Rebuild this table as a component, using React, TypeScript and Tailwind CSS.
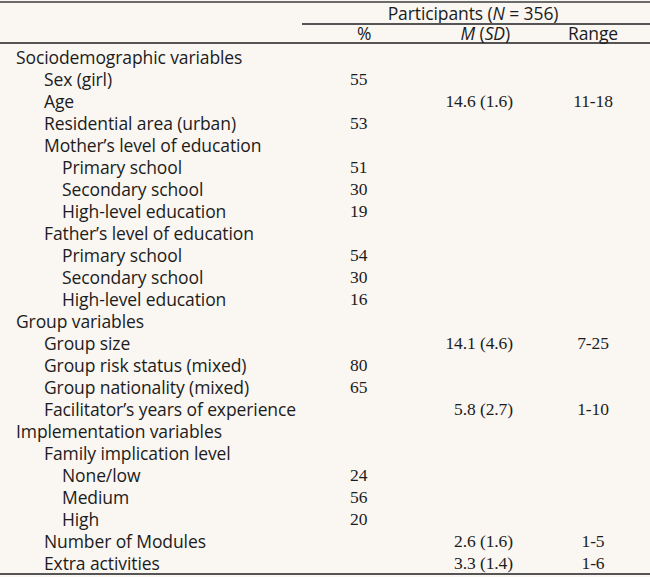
import React from 'react';

type Row = {
  label: string;
  level: 0 | 1 | 2;
  pct?: string;
  msd?: string;
  range?: string;
};

const rows: Row[] = [
  { label: 'Sociodemographic variables', level: 0 },
  { label: 'Sex (girl)', level: 1, pct: '55' },
  { label: 'Age', level: 1, msd: '14.6 (1.6)', range: '11-18' },
  { label: 'Residential area (urban)', level: 1, pct: '53' },
  { label: 'Mother\u2019s level of education', level: 1 },
  { label: 'Primary school', level: 2, pct: '51' },
  { label: 'Secondary school', level: 2, pct: '30' },
  { label: 'High-level education', level: 2, pct: '19' },
  { label: 'Father\u2019s level of education', level: 1 },
  { label: 'Primary school', level: 2, pct: '54' },
  { label: 'Secondary school', level: 2, pct: '30' },
  { label: 'High-level education', level: 2, pct: '16' },
  { label: 'Group variables', level: 0 },
  { label: 'Group size', level: 1, msd: '14.1 (4.6)', range: '7-25' },
  { label: 'Group risk status (mixed)', level: 1, pct: '80' },
  { label: 'Group nationality (mixed)', level: 1, pct: '65' },
  { label: 'Facilitator\u2019s years of experience', level: 1, msd: '5.8 (2.7)', range: '1-10' },
  { label: 'Implementation variables', level: 0 },
  { label: 'Family implication level', level: 1 },
  { label: 'None/low', level: 2, pct: '24' },
  { label: 'Medium', level: 2, pct: '56' },
  { label: 'High', level: 2, pct: '20' },
  { label: 'Number of Modules', level: 1, msd: '2.6 (1.6)', range: '1-5' },
  { label: 'Extra activities', level: 1, msd: '3.3 (1.4)', range: '1-6' },
];

const indent = ['pl-[16px]', 'pl-[44px]', 'pl-[62px]'];
const num = "font-['Liberation_Serif',serif] text-[17.5px]";

export default function App() {
  return (
    <div className="w-[650px] h-[577px] bg-[#faf6f2] text-[#1c1c1c] pt-px font-['Open_Sans',sans-serif] text-[17.5px] tracking-[-0.1px]">
      <div className="border-t-2 border-[#6b6b6b]">
        {/* cabecera */}
        <div className="grid grid-cols-[302px_348px] h-[20px] items-center">
          <div />
          <div className="text-center leading-[15px] pr-[6px]">
            Participants (<i>N</i> = 356)
          </div>
        </div>
        <div className="grid grid-cols-[302px_348px]">
          <div />
          <div className="border-t-2 border-[#555]" />
        </div>
        <div className="grid grid-cols-[302px_118px_120px_110px] h-[19px] items-center leading-[15px] border-b-2 border-[#555]">
          <div />
          <div className="pl-[55px]">%</div>
          <div className="text-right pr-[30px]">
            <i>M</i> (<i>SD</i>)
          </div>
          <div className="text-center pr-[4px]">Range</div>
        </div>

        {/* cuerpo */}
        <div className="pt-px border-b-2 border-[#555]">
          {rows.map((r, i) => (
            <div key={i} className="grid grid-cols-[302px_118px_120px_110px] h-[22px] items-center leading-none pt-[3px]">
              <div className={`${indent[r.level]} whitespace-nowrap`}>{r.label}</div>
              <div className={`pl-[48px] ${num}`}>{r.pct}</div>
              <div className={`text-right pr-[27px] ${num}`}>{r.msd}</div>
              <div className={`text-center pr-[4px] ${num}`}>{r.range}</div>
            </div>
          ))}
        </div>
      </div>
    </div>
  );
}
